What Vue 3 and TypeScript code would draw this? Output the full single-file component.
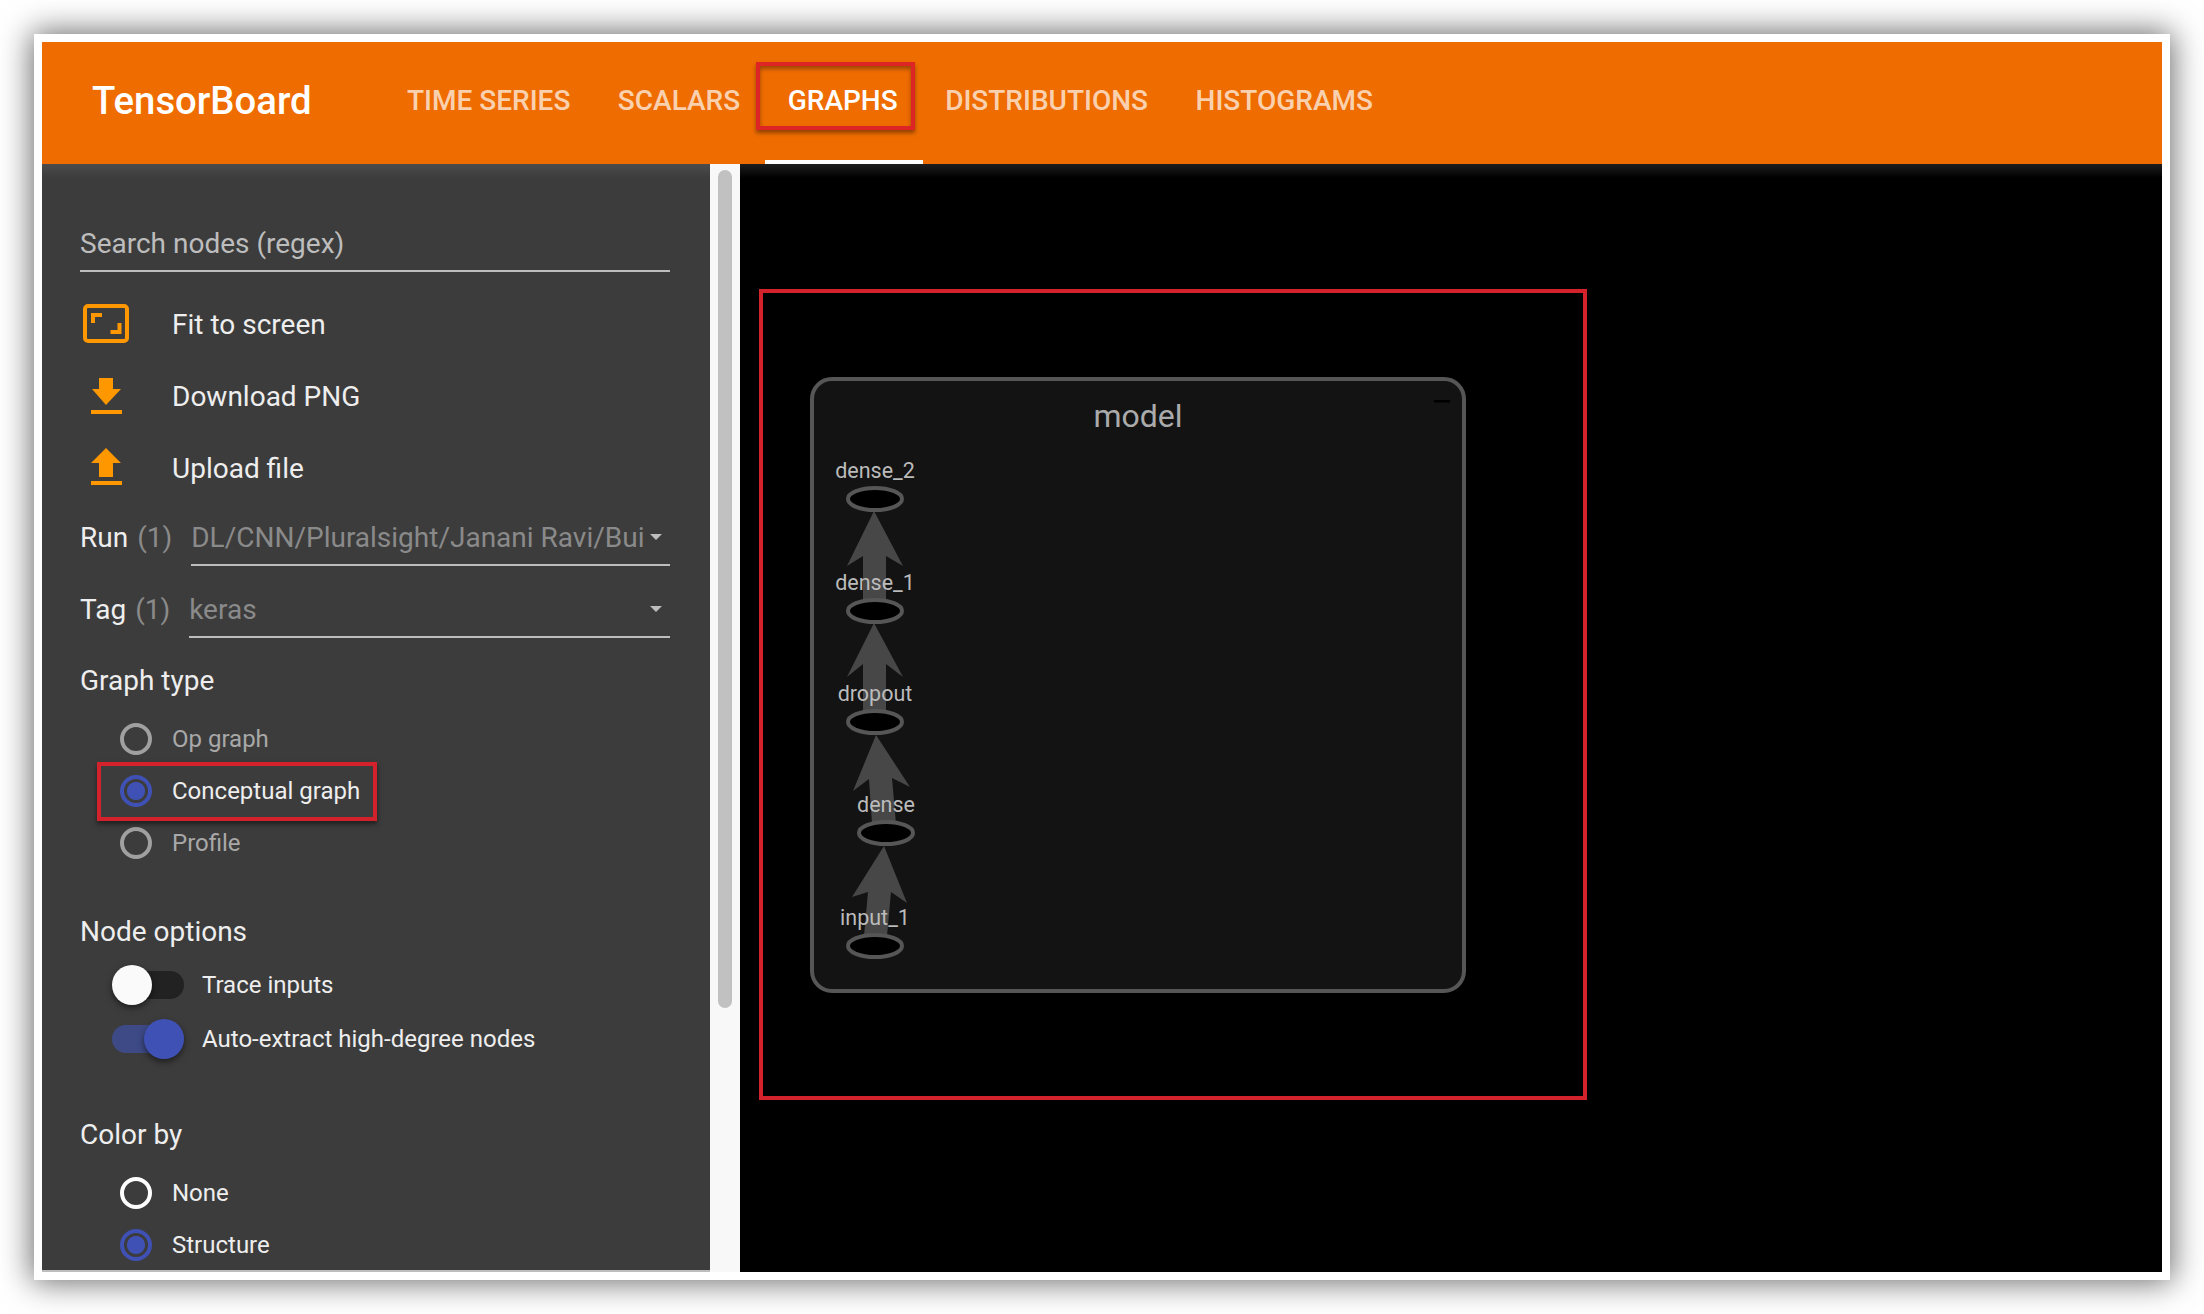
<template>
  <div class="page">
    <div class="frame">
      <header class="topbar">
        <div class="brand">TensorBoard</div>
        <nav class="tabs">
          <div v-for="t in tabs" :key="t" class="tab" :class="{ active: t === 'GRAPHS' }">
            {{ t }}
            <span v-if="t === 'GRAPHS'" class="tab-mark"></span>
          </div>
        </nav>
      </header>

      <div class="body">
        <aside class="sidebar">
          <div class="side-inner">
            <div class="search">Search nodes (regex)</div>

            <div class="action">
              <svg class="ico fit" width="48" height="40" viewBox="0 0 48 40">
                <rect x="3" y="2" width="42" height="35" rx="3" fill="none" stroke="#ff9800" stroke-width="4" />
                <path d="M9 19V9h11v4h-7v6zM39.500 19v11h-11v-4h7v-7z" fill="#ff9800" />
              </svg>
              <span>Fit to screen</span>
            </div>
            <div class="action">
              <svg class="ico" width="48" height="40" viewBox="0 0 48 40">
                <path d="M17 1h14v11h8L24 28 10 12h7zM9 33h31v4H9z" fill="#ff9800" />
              </svg>
              <span>Download PNG</span>
            </div>
            <div class="action">
              <svg class="ico" width="48" height="40" viewBox="0 0 48 40">
                <path d="M24 0l15 15h-8v14H17V15H9zM9 33h31v4H9z" fill="#ff9800" />
              </svg>
              <span>Upload file</span>
            </div>

            <div class="pick run">
              <span class="pick-label">Run</span>
              <span class="pick-count">(1)</span>
              <div class="pick-box">
                <span class="pick-value">DL/CNN/Pluralsight/Janani Ravi/Bui</span>
                <span class="caret"></span>
              </div>
            </div>
            <div class="pick tag">
              <span class="pick-label">Tag</span>
              <span class="pick-count">(1)</span>
              <div class="pick-box">
                <span class="pick-value">keras</span>
                <span class="caret"></span>
              </div>
            </div>

            <div class="heading graph-type">Graph type</div>
            <div class="radios">
              <div v-for="r in graphTypes" :key="r.label" class="radio" :class="{ on: r.on, dim: !r.on }">
                <span class="dot"></span>
                <span>{{ r.label }}</span>
              </div>
              <div class="hl"></div>
            </div>

            <div class="heading node-options">Node options</div>
            <div class="toggle">
              <span class="track"><span class="thumb"></span></span>
              <span>Trace inputs</span>
            </div>
            <div class="toggle on">
              <span class="track"><span class="thumb"></span></span>
              <span>Auto-extract high-degree nodes</span>
            </div>

            <div class="heading color-by">Color by</div>
            <div class="radios">
              <div class="radio"><span class="dot"></span><span>None</span></div>
              <div class="radio on"><span class="dot"></span><span>Structure</span></div>
            </div>
          </div>
        </aside>

        <div class="scroll"><div class="scroll-thumb"></div></div>

        <main class="canvas">
          <svg class="graph" width="1422" height="1108" viewBox="740 164 1422 1108">
            <rect x="761" y="291" width="824" height="807" fill="none" stroke="#d3222c" stroke-width="4" />
            <rect x="812" y="379" width="652" height="612" rx="20" fill="#131313" stroke="#565656" stroke-width="4" />
            <text x="1138" y="427" class="title">model</text>
            <rect x="1434" y="400" width="16" height="2.500" fill="#000" />

            <polygon v-for="(a, i) in arrows" :key="i" :points="a" fill="#474747" />

            <g v-for="n in nodes" :key="n.name">
              <ellipse :cx="n.x" :cy="n.y" rx="27" ry="11" fill="#000" stroke="#565656" stroke-width="4" />
              <text :x="n.tx" :y="n.y - 21" class="node-label">{{ n.name }}</text>
            </g>
          </svg>
        </main>
      </div>
    </div>
  </div>
</template>

<script setup lang="ts">
interface GraphNode {
  name: string
  x: number
  y: number
  tx: number
}

const tabs: string[] = ['TIME SERIES', 'SCALARS', 'GRAPHS', 'DISTRIBUTIONS', 'HISTOGRAMS']

const graphTypes = [
  { label: 'Op graph', on: false },
  { label: 'Conceptual graph', on: true },
  { label: 'Profile', on: false },
]

const nodes: GraphNode[] = [
  { name: 'dense_2', x: 875, y: 499, tx: 875 },
  { name: 'dense_1', x: 875, y: 611, tx: 875 },
  { name: 'dropout', x: 875, y: 722, tx: 875 },
  { name: 'dense', x: 886, y: 833, tx: 886 },
  { name: 'input_1', x: 875, y: 946, tx: 875 },
]

const arrows: string[] = [
  '874,511 903,566 886,556 886,601 863,601 863,556 847,566',
  '874,623 903,677 886,664 886,712 863,712 863,664 847,677',
  '876,735 910,787 892,778 896,824 872,824 869,779 853,791',
  '884,846 907,903 891,892 887,936 864,936 868,892 852,897',
]
</script>

<style>
html,
body {
  margin: 0;
  background: #fff;
}
</style>

<style scoped>
.page {
  width: 2204px;
  height: 1314px;
  padding: 34px;
  box-sizing: border-box;
  font-family: Roboto, "Liberation Sans", sans-serif;
}

.frame {
  width: 2136px;
  height: 1246px;
  box-sizing: border-box;
  padding: 8px;
  background: #fff;
  box-shadow: 0 0 30px 2px rgba(0, 0, 0, 0.6);
  display: flex;
  flex-direction: column;
}

.topbar {
  height: 122px;
  flex: none;
  background: #ef6c00;
  display: flex;
  align-items: center;
  padding-left: 50px;
  color: #fff;
}

.brand {
  font-size: 38.300px;
  font-weight: 500;
  width: 315px;
  margin-bottom: 5px;
}

.tabs {
  display: flex;
  height: 100%;
  gap: 47.500px;
}

.tab {
  position: relative;
  display: flex;
  align-items: center;
  box-sizing: border-box;
  padding-bottom: 5px;
  font-size: 28px;
  font-weight: 500;
  color: rgba(255, 255, 255, 0.7);
}

.tab.active {
  color: #fff;
}

.tab.active::before {
  content: "";
  position: absolute;
  left: -32px;
  right: -17px;
  top: 20px;
  height: 68px;
  box-sizing: border-box;
  border: 4px solid #dd2525;
  box-shadow: 0 3px 4px rgba(0, 0, 0, 0.4), inset 0 3px 4px rgba(0, 0, 0, 0.35);
}

.tab-mark {
  position: absolute;
  left: -23px;
  right: -25px;
  bottom: 0;
  height: 4px;
  background: #fff;
}

.body {
  flex: 1;
  display: flex;
  min-height: 0;
}

.sidebar {
  width: 668px;
  flex: none;
  background: #3c3c3c;
  border-bottom: 2px solid #bdbdbd;
  box-sizing: border-box;
  overflow: hidden;
  color: #fff;
}

.side-inner {
  padding: 60px 40px 0 38px;
  background: linear-gradient(#4c4c4c, #3c3c3c 14px) no-repeat;
  font-size: 28px;
}

.search {
  height: 48px;
  line-height: 40px;
  box-sizing: border-box;
  color: #bdbdbd;
  border-bottom: 2px solid #bdbdbd;
}

.search + .action {
  margin-top: 17px;
}

.action {
  display: flex;
  align-items: center;
  height: 71.800px;
  gap: 42px;
  margin-left: 2px;
  color: #eee;
}

.action .ico {
  flex: none;
}

.action .fit {
  margin-top: -2px;
}

.pick {
  display: flex;
  align-items: center;
  height: 72px;
}

.pick.run {
  margin-top: -2.400px;
}

.pick-label {
  color: #eee;
  margin-bottom: 2px;
}

.pick-count {
  color: #8a8a8a;
  margin-left: 9px;
  margin-bottom: 2px;
}

.pick-box {
  flex: 1;
  min-width: 0;
  margin-left: 19px;
  height: 56px;
  box-sizing: border-box;
  border-bottom: 2px solid #bdbdbd;
  display: flex;
  align-items: center;
}

.pick-value {
  flex: 1;
  min-width: 0;
  overflow: hidden;
  white-space: nowrap;
  color: #8a8a8a;
  margin-right: 4px;
}

.caret {
  flex: none;
  margin-right: 8px;
  width: 0;
  height: 0;
  border-left: 6px solid transparent;
  border-right: 6px solid transparent;
  border-top: 6px solid #bdbdbd;
}

.heading {
  color: #eee;
  line-height: 40px;
}

.graph-type {
  margin-top: 15px;
}

.radios {
  position: relative;
  margin-top: 12px;
  padding-left: 40px;
  font-size: 24px;
}

.radio {
  display: flex;
  align-items: center;
  height: 52px;
  gap: 20px;
  color: #eee;
}

.radio.dim {
  color: #a8a8a8;
}

.dot {
  width: 32px;
  height: 32px;
  box-sizing: border-box;
  border-radius: 50%;
  border: 4px solid #fff;
  flex: none;
}

.radio.dim .dot {
  border-color: #a0a0a0;
}

.radio.on .dot {
  border-color: #3f51b5;
  background: radial-gradient(circle, #3f51b5 0 8.500px, transparent 9.500px);
}

.hl {
  position: absolute;
  left: 17px;
  top: 49px;
  width: 280px;
  height: 59px;
  box-sizing: border-box;
  border: 4px solid #d3222c;
  box-shadow: 0 3px 5px rgba(0, 0, 0, 0.5);
}

.node-options {
  margin-top: 43px;
}

.toggle {
  display: flex;
  align-items: center;
  height: 54px;
  gap: 18px;
  padding-left: 32px;
  font-size: 24px;
  color: #eee;
}

.node-options + .toggle {
  margin-top: 6px;
}

.track {
  position: relative;
  width: 72px;
  height: 28px;
  border-radius: 14px;
  background: #222;
  flex: none;
}

.thumb {
  position: absolute;
  left: 0;
  top: -6px;
  width: 40px;
  height: 40px;
  border-radius: 50%;
  background: #fafafa;
  box-shadow: 0 3px 6px rgba(0, 0, 0, 0.5);
}

.toggle.on .track {
  background: #3d4a86;
}

.toggle.on .thumb {
  left: 32px;
  background: #3f51b5;
}

.color-by {
  margin-top: 49px;
}

.scroll {
  width: 30px;
  flex: none;
  background: #f8f8f8;
  padding: 6px 8px 0;
  box-sizing: border-box;
}

.scroll-thumb {
  height: 838px;
  border-radius: 7px;
  background: #c1c1c1;
}

.canvas {
  flex: 1;
  background: #000;
  position: relative;
  overflow: hidden;
}

.canvas::before {
  content: "";
  position: absolute;
  inset: 0 0 auto 0;
  height: 14px;
  background: linear-gradient(#1e1e1e, #000);
}

.graph {
  position: absolute;
  left: 0;
  top: 0;
}

.title {
  font-size: 32px;
  fill: #ababab;
  text-anchor: middle;
}

.node-label {
  font-size: 21.500px;
  fill: #bbb;
  text-anchor: middle;
}
</style>
